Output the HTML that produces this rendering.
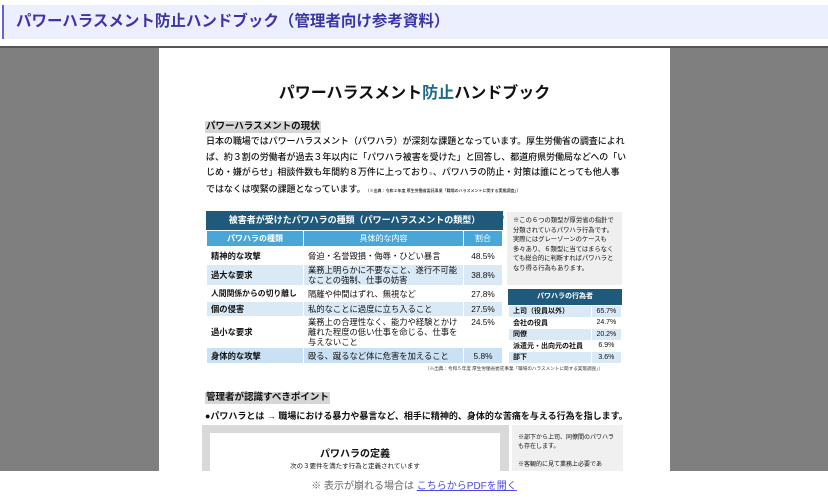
<!DOCTYPE html>
<html><head><meta charset="utf-8"><style>
*{margin:0;padding:0;box-sizing:border-box}
body{width:828px;height:503px;overflow:hidden;background:#fff;font-family:"Liberation Sans","Noto Sans CJK JP",sans-serif;position:relative;color:#111}
.hdr{position:absolute;left:2px;top:5px;width:826px;height:34px;background:#eceffd;border-left:2px solid #6a63d6;color:#3b35a8;font-size:15.5px;font-weight:bold;line-height:34px;padding-left:12px}
.view{position:absolute;left:0;top:46px;width:828px;height:425px;background:#7f7f7f;border-top:2px solid #555;overflow:hidden}
.page{position:absolute;left:159px;top:0;width:511px;height:430px;background:#fff}
.a{position:absolute}
.t{left:0;width:511px;text-align:center;top:31px;font-size:16px;font-weight:bold}
.h{background:#d6d6d6;font-size:9.5px;font-weight:bold;padding:0 1px;line-height:12px}
.body{left:47px;top:86px;font-size:9px;letter-spacing:-0.05px;line-height:15.5px;font-weight:500;white-space:nowrap}
.s{font-size:4px;letter-spacing:0}
table{border-collapse:collapse;font-size:8.3px}
td{padding:0 4px;border:1px solid #fff;vertical-align:middle}
.b td:first-child{font-weight:bold}
</style></head><body>
<div class="hdr">パワーハラスメント防止ハンドブック（管理者向け参考資料）</div>
<div class="view"><div class="page">
<div class="a t">パワーハラスメント<span style="color:#1e6a8a">防止</span>ハンドブック</div>
<div class="a h" style="left:46px;top:73px">パワーハラスメントの現状</div>
<div class="a body">日本の職場ではパワーハラスメント（パワハラ）が深刻な課題となっています。厚生労働省の調査によれ<br>ば、約３割の労働者が過去３年以内に「パワハラ被害を受けた」と回答し、都道府県労働局などへの「い<br>じめ・嫌がらせ」相談件数も年間約８万件に上っており<span class="s">※</span>、パワハラの防止・対策は誰にとっても他人事<br>ではなくは喫緊の課題となっています。<span class="s">（※出典：令和２年度 厚生労働省委託事業「職場のハラスメントに関する実態調査」）</span></div>
<div class="a" style="left:47px;top:163px;width:297px">
<div style="background:#1f5a7d;color:#fff;font-size:9px;font-weight:bold;height:19px;line-height:19px;text-align:center">被害者が受けたパワハラの種類（パワーハラスメントの類型）</div>
<table class="b" style="width:297px">
<tr style="background:#4aa6d6;color:#fff;height:16px;text-align:center;font-size:8px"><td style="width:97px">パワハラの種類</td><td style="width:160px">具体的な内容</td><td>割合</td></tr>
<tr style="background:#fff;height:18px"><td>精神的な攻撃</td><td>脅迫・名誉毀損・侮辱・ひどい暴言</td><td style="text-align:center">48.5%</td></tr>
<tr style="background:#d9e9f5;height:21px"><td>過大な要求</td><td style="line-height:10px">業務上明らかに不要なこと、遂行不可能なことの強制、仕事の妨害</td><td style="text-align:center">38.8%</td></tr>
<tr style="background:#fff;height:16px"><td style="font-size:7.8px">人間関係からの切り離し</td><td>隔離や仲間はずれ、無視など</td><td style="text-align:center">27.8%</td></tr>
<tr style="background:#d9e9f5;height:15px"><td>個の侵害</td><td>私的なことに過度に立ち入ること</td><td style="text-align:center">27.5%</td></tr>
<tr style="background:#fff;height:31px"><td>過小な要求</td><td style="line-height:10px">業務上の合理性なく、能力や経験とかけ離れた程度の低い仕事を命じる、仕事を与えないこと</td><td style="text-align:center;vertical-align:top">24.5%</td></tr>
<tr style="background:#c9e1f2;height:16px"><td>身体的な攻撃</td><td>殴る、蹴るなど体に危害を加えること</td><td style="text-align:center">5.8%</td></tr>
</table></div>
<div class="a" style="left:348px;top:164px;width:115px;height:73px;background:#efefef;font-size:6.3px;line-height:9.5px;padding:4px 6px">※この６つの類型が厚労省の指針で分類されているパワハラ行為です。実際にはグレーゾーンのケースも多々あり、６類型に当てはまらなくても総合的に判断すればパワハラとなり得る行為もあります。</div>
<div class="a" style="left:341px;top:165px;color:#1f5a7d;font-size:7px">◂</div>
<div class="a" style="left:349px;top:241px;width:114px">
<div style="background:#1f5a7d;color:#fff;font-size:7px;font-weight:bold;height:16px;line-height:16px;text-align:center">パワハラの行為者</div>
<table class="b" style="width:114px;font-size:7px">
<tr style="background:#d9e9f5;height:11.5px"><td>上司（役員以外）</td><td style="text-align:center">65.7%</td></tr>
<tr style="background:#fff;height:11.5px"><td>会社の役員</td><td style="text-align:center">24.7%</td></tr>
<tr style="background:#d9e9f5;height:11.5px"><td>同僚</td><td style="text-align:center">20.2%</td></tr>
<tr style="background:#fff;height:11.5px"><td>派遣元・出向元の社員</td><td style="text-align:center">6.9%</td></tr>
<tr style="background:#d9e9f5;height:11.5px"><td>部下</td><td style="text-align:center">3.6%</td></tr>
</table></div>
<div class="a" style="left:266px;top:318px;font-size:4.6px;color:#333;white-space:nowrap">（※出典：令和５年度 厚生労働省委託事業「職場のハラスメントに関する実態調査」）</div>
<div class="a h" style="left:46px;top:344px">管理者が認識すべきポイント</div>
<div class="a" style="left:46px;top:361px;font-size:9px;font-weight:bold;white-space:nowrap">●パワハラとは → 職場における暴力や暴言など、相手に精神的、身体的な苦痛を与える行為を指します。</div>
<div class="a" style="left:43px;top:377px;width:307px;height:60px;background:#d9d9d9"><div class="a" style="left:8px;top:8px;width:290px;height:60px;background:#fff;text-align:center"><div style="font-size:10px;font-weight:bold;margin-top:12px">パワハラの定義</div><div style="font-size:6.5px">次の３要件を満たす行為と定義されています</div></div></div>
<div class="a" style="left:353px;top:377px;width:111px;height:60px;background:#f0f0f0;font-size:6px;line-height:9px;padding:9px 6px">※部下から上司、同僚間のパワハラも存在します。<br><br>※客観的に見て業務上必要であ</div>
</div></div>
<div class="a" style="left:0;top:477px;width:828px;text-align:center;font-size:10px;color:#666">※ 表示が崩れる場合は <span style="color:#4a4ae0;text-decoration:underline">こちらからPDFを開く</span></div>
</body></html>
